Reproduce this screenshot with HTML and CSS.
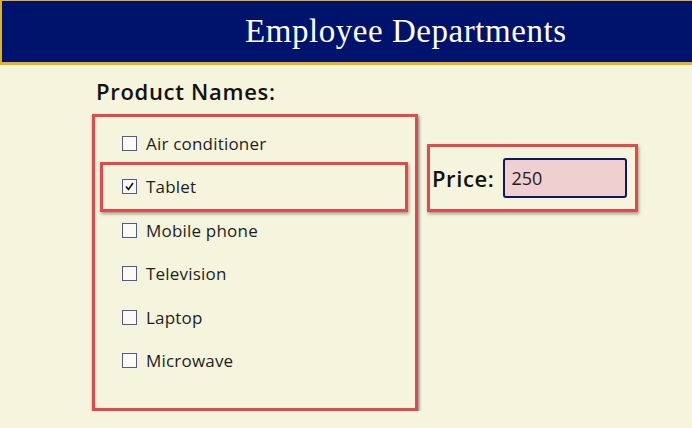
FILE: index.html
```html
<!DOCTYPE html>
<html>
  <head>
    <meta charset="utf-8">
    <title>Employee Departments</title>
    <link rel="stylesheet" href="styles.css">
  </head>
  <body>
    <div class="top">
      <div class="ttl">Employee Departments</div>
    </div>
    <div class="main">
      <div class="col">
        <div class="lbl">Product Names:</div>
        <div class="lst">
          <div class="itm"><span class="chk"></span>Air conditioner</div>
          <div class="itm marked"><span class="chk">
            <svg width="11" height="11" viewBox="0 0 11 11"><polyline points="2,5.5 4.5,8.5 9,2" fill="none" stroke="#111" stroke-width="1.6"/></svg>
          </span>Tablet</div>
          <div class="itm"><span class="chk"></span>Mobile phone</div>
          <div class="itm"><span class="chk"></span>Television</div>
          <div class="itm"><span class="chk"></span>Laptop</div>
          <div class="itm"><span class="chk"></span>Microwave</div>
        </div>
      </div>
      <div class="prc">
        <div class="plb">Price:</div>
        <div class="inp">250</div>
      </div>
    </div>
  </body>
</html>
```

FILE: styles.css
```css
body {
  margin: 0;
  background: #f5f4dc;
  font-family: "Open Sans", sans-serif;
  color: #1e1e1e;
}
.top {
  height: 61px;
  background: #00136c;
  border-top: 1px solid #e3b022;
  border-left: 2px solid #e3b022;
  border-bottom: 3px solid #e8b424;
  display: flex;
  align-items: center;
}
.ttl {
  padding-left: 243px;
  font-family: "Liberation Serif", serif;
  font-size: 33px;
  letter-spacing: 0.55px;
  color: #ffffff;
}
.main {
  display: flex;
  align-items: flex-start;
  gap: 9px;
  padding: 11px 0 0 92px;
}
.lbl {
  padding-left: 4px;
  font-size: 22px;
  font-weight: 600;
  letter-spacing: 0.7px;
  line-height: 30px;
  margin-bottom: 8px;
  color: #111;
}
.lst {
  width: 320px;
  height: 286px;
  border: 3px solid #e6474a;
  box-shadow: 1px 2px 3px rgba(0, 0, 40, 0.55);
  padding: 4.5px 0 0 0;
  box-sizing: content-box;
}
.itm {
  position: relative;
  display: flex;
  align-items: center;
  height: 43.5px;
  margin: 0 10px 0 8px;
  padding-left: 19px;
  font-size: 17px;
  letter-spacing: 0.2px;
}
.marked::after {
  content: '';
  position: absolute;
  top: -3px;
  left: -3px;
  right: -3px;
  bottom: -3px;
  border: 3px solid #e6474a;
  box-shadow: 1px 2px 3px rgba(0, 0, 0, 0.35);
}
.chk {
  width: 13px;
  height: 13px;
  border: 1.5px solid #535a8a;
  background: #fbfbf4;
  margin-right: 9px;
  display: flex;
  align-items: center;
  justify-content: center;
}
.prc {
  margin-top: 68px;
  width: 203px;
  height: 62px;
  border: 3px solid #e6474a;
  box-shadow: 1px 2px 3px rgba(0, 0, 0, 0.35);
  display: flex;
  align-items: center;
  padding-left: 2px;
  gap: 9px;
}
.plb {
  font-size: 22px;
  font-weight: 600;
  letter-spacing: 0.6px;
  color: #111;
}
.inp {
  width: 114px;
  height: 36px;
  border: 2px solid #0f1860;
  border-radius: 3px;
  background: #efcfcf;
  padding-left: 6px;
  display: flex;
  align-items: center;
  font-size: 18px;
  color: #222;
}
```
